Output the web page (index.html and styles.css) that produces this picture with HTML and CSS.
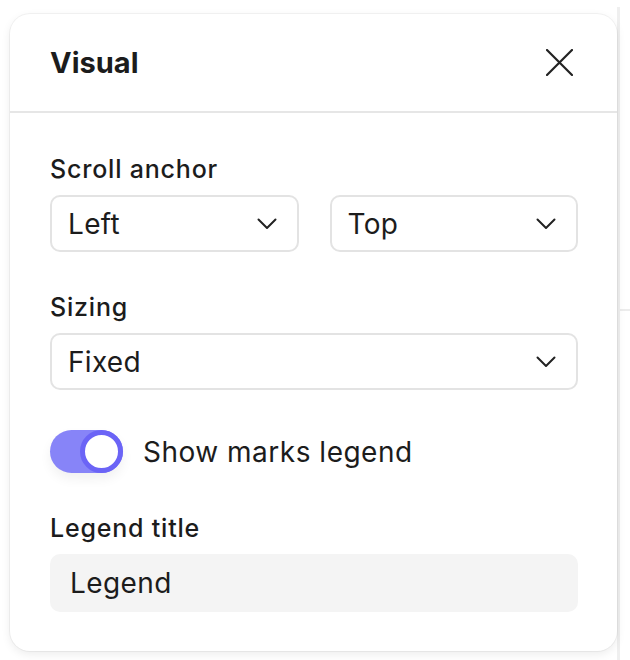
FILE: index.html
```html
<!DOCTYPE html>
<html>
<head>
<meta charset="utf-8">
<link rel="stylesheet" href="styles.css">
</head>
<body>
<div class="page">
  <div class="card">
    <div class="header">
      <h1 class="title">Visual</h1>
      <button class="close" aria-label="Close">
        <svg width="27" height="27" viewBox="0 0 27 27"><path d="M1 1 L26 26 M26 1 L1 26" stroke="#222" stroke-width="2.2" fill="none" stroke-linecap="round"/></svg>
      </button>
    </div>
    <div class="body">
      <div class="field">
        <div class="label">Scroll anchor</div>
        <div class="row">
          <div class="select"><span>Left</span><svg class="chev" width="20" height="12" viewBox="0 0 20 12"><path d="M1.5 1.5 L10 10 L18.5 1.5" stroke="#222" stroke-width="2" fill="none" stroke-linecap="round" stroke-linejoin="round"/></svg></div>
          <div class="select"><span>Top</span><svg class="chev" width="20" height="12" viewBox="0 0 20 12"><path d="M1.5 1.5 L10 10 L18.5 1.5" stroke="#222" stroke-width="2" fill="none" stroke-linecap="round" stroke-linejoin="round"/></svg></div>
        </div>
      </div>
      <div class="field">
        <div class="label">Sizing</div>
        <div class="select"><span>Fixed</span><svg class="chev" width="20" height="12" viewBox="0 0 20 12"><path d="M1.5 1.5 L10 10 L18.5 1.5" stroke="#222" stroke-width="2" fill="none" stroke-linecap="round" stroke-linejoin="round"/></svg></div>
      </div>
      <div class="toggle-row">
        <div class="toggle"><div class="knob"></div></div>
        <span class="toggle-label">Show marks legend</span>
      </div>
      <div class="field">
        <div class="label">Legend title</div>
        <div class="input">Legend</div>
      </div>
    </div>
  </div>
  <div class="strip"><div class="hline"></div></div>
</div>
</body>
</html>
```
FILE: styles.css
```css
* { box-sizing: border-box; }
html, body { margin: 0; padding: 0; background: #fff; }
body { font-family: Inter, "Noto Sans", sans-serif; color: #1c1c1c; }
.page { display: flex; align-items: flex-start; padding: 14px 0 0 10px; height: 660px; }
.card {
  width: 607px;
  height: 637px;
  background: #fff;
  border-radius: 20px;
  box-shadow: 0 0 0 1px rgba(0,0,0,0.045), 0 3px 10px rgba(0,0,0,0.08);
  display: flex;
  flex-direction: column;
  position: relative;
  z-index: 1;
}
.header {
  height: 100px;
  display: flex;
  align-items: center;
  justify-content: space-between;
  padding: 0 44px 0 40px;
  border-bottom: 2px solid #e6e6e6;
}
.title { margin: 0; font-size: 29px; font-weight: 700; letter-spacing: 0; }
.close { border: 0; background: none; padding: 0; width: 27px; height: 27px; display: flex; }
.body { padding: 41px 39px 39px 40px; display: flex; flex-direction: column; gap: 40px; }
.field { display: flex; flex-direction: column; gap: 11px; }
.label { font-size: 25px; font-weight: 500; line-height: 30px; letter-spacing: 0.8px; }
.row { display: grid; grid-template-columns: 1fr 1fr; gap: 31px; }
.select {
  height: 57px;
  border: 2px solid #e3e3e3;
  border-radius: 10px;
  display: flex;
  align-items: center;
  justify-content: space-between;
  padding: 0 20px 0 16px;
  font-size: 28px;
  letter-spacing: 0.3px;
}
.chev { display: block; }
.toggle-row { display: flex; align-items: center; gap: 20px; }
.toggle {
  width: 73px; height: 43px; border-radius: 22px;
  background: #8784f8;
  display: flex; justify-content: flex-end;
  box-shadow: 0 6px 12px rgba(0,0,0,0.06);
}
.knob { width: 43px; height: 43px; border-radius: 50%; background: #fff; border: 5px solid #6b64f6; }
.toggle-label { font-size: 28px; letter-spacing: 0.5px; }
.input {
  height: 58px; background: #f4f4f4; border-radius: 10px;
  display: flex; align-items: center; padding: 0 20px; font-size: 28px; letter-spacing: 0.4px;
}
.strip { flex: 1; margin-top: -7px; align-self: stretch; border-left: 3px solid #efefef; position: relative; }
.hline { height: 2px; background: #ececec; margin-top: 302px; }
```
